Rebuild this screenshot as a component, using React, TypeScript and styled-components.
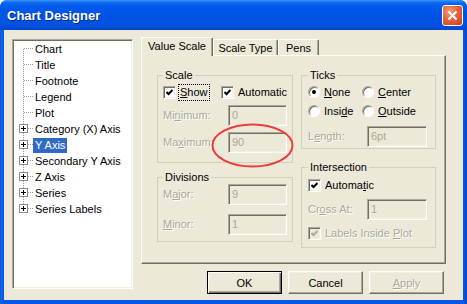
import React from "react";
import styled, { createGlobalStyle } from "styled-components";

const GlobalStyle = createGlobalStyle`
  html, body {
    margin: 0;
    padding: 0;
  }
  body {
    width: 467px;
    height: 304px;
    overflow: hidden;
    font: 11px "Liberation Sans", Arial, sans-serif;
    color: #000;
  }
  * {
    box-sizing: border-box;
  }
`;

const Window = styled.div`
  position: relative;
  width: 467px;
  height: 304px;
  display: flex;
  flex-direction: column;
  background: linear-gradient(90deg, #0a3fc0 0, #1a6cf0 1px, #0658e8 3px, #0658e8 calc(100% - 3px), #0a3fc0 100%);
  border-radius: 7px 7px 0 0;
  overflow: hidden;
`;

const TitleBar = styled.div`
  height: 30px;
  flex: none;
  display: flex;
  align-items: center;
  justify-content: space-between;
  padding: 0 4px 0 7px;
  background: linear-gradient(180deg, #3d95ff 0, #0a66f0 3px, #0058ec 8px, #0055e5 50%, #0152e0 85%, #0047cc 100%);
`;

const Title = styled.div`
  color: #fff;
  font: bold 13px "Liberation Sans", Arial, sans-serif;
  text-shadow: 1px 1px 0 #0a2a80;
  padding-top: 1px;
`;

const CloseButton = styled.div`
  width: 21px;
  height: 21px;
  border: 1px solid #fff;
  border-radius: 3px;
  background: radial-gradient(circle at 35% 30%, #f29a7c 0, #e2653f 45%, #c73e1a 100%);
  display: flex;
  align-items: center;
  justify-content: center;
`;

const Client = styled.div`
  flex: 1;
  margin: 0 4px 4px;
  background: #ece9d8;
  display: flex;
  padding: 0 17px 0 8px;
`;

const Tree = styled.div`
  margin-top: 9px;
  width: 121px;
  height: 250px;
  flex: none;
  background: #fff;
  border: 1px solid;
  border-color: #aca899 #fff #fff #aca899;
  box-shadow: inset 1px 1px 0 #716f64, inset -1px -1px 0 #f1efe2;
  padding: 1px 1px;
`;

const TreeRow = styled.div`
  display: flex;
  align-items: center;
  height: 16px;
`;

const TreeLabel = styled.span<{ $selected?: boolean }>`
  padding: 0 2px;
  line-height: 15px;
  white-space: nowrap;
  background: ${(p) => (p.$selected ? "#316ac5" : "transparent")};
  color: ${(p) => (p.$selected ? "#fff" : "#000")};
`;

const Right = styled.div`
  flex: 1;
  margin-left: 8px;
  padding-top: 7px;
  display: flex;
  flex-direction: column;
`;

const Tabs = styled.div`
  display: flex;
  align-items: flex-end;
  height: 18px;
  position: relative;
  z-index: 1;
`;

const Tab = styled.div<{ $active?: boolean; $w: number }>`
  width: ${(p) => p.$w}px;
  height: ${(p) => (p.$active ? 19 : 16)}px;
  margin-bottom: ${(p) => (p.$active ? -1 : 0)}px;
  background: #ece9d8;
  border: 1px solid;
  border-bottom: none;
  border-color: #fff #716f64 #716f64 #fff;
  border-radius: 2px 2px 0 0;
  box-shadow: inset -1px 0 0 #aca899;
  display: flex;
  align-items: center;
  justify-content: center;
  padding-bottom: ${(p) => (p.$active ? 2 : 0)}px;
  white-space: nowrap;
`;

const Panel = styled.div`
  height: 209px;
  border: 1px solid;
  border-color: #fff #716f64 #716f64 #fff;
  box-shadow: inset -1px -1px 0 #aca899;
  padding: 13px 0 0 15px;
  display: flex;
  gap: 8px;
`;

const Column = styled.div<{ $w: number; $gap: number }>`
  width: ${(p) => p.$w}px;
  display: flex;
  flex-direction: column;
  gap: ${(p) => p.$gap}px;
`;

const Group = styled.fieldset<{ $h: number; $pad: number }>`
  margin: 0;
  min-width: 0;
  height: ${(p) => p.$h}px;
  padding: 0 ${(p) => p.$pad}px;
  border: 1px solid #d0d0bf;
  border-radius: 0;
`;

const Legend = styled.legend`
  margin-left: 0;
  padding: 0 2px;
  line-height: 13px;
`;

const Row = styled.div<{ $mt: number; $h?: number }>`
  display: flex;
  align-items: center;
  margin-top: ${(p) => p.$mt}px;
  height: ${(p) => p.$h ?? 16}px;
`;

const Item = styled.div<{ $w?: number }>`
  display: flex;
  align-items: center;
  gap: 4px;
  width: ${(p) => (p.$w ? `${p.$w}px` : "auto")};
  white-space: nowrap;
`;

const Box = styled.span<{ $disabled?: boolean }>`
  width: 13px;
  height: 13px;
  flex: none;
  border: 1px solid;
  border-color: #aca899 #fff #fff #aca899;
  box-shadow: inset 1px 1px 0 #716f64, inset -1px -1px 0 #f1efe2;
  background: ${(p) => (p.$disabled ? "#ece9d8" : "#fff")};
  display: flex;
  align-items: center;
  justify-content: center;
`;

const Radio = styled.span<{ $on?: boolean }>`
  width: 12px;
  height: 12px;
  flex: none;
  border-radius: 50%;
  border: 1px solid;
  border-color: #aca899 #fff #fff #aca899;
  box-shadow: inset 1px 1px 0 #716f64;
  background: #fff;
  display: flex;
  align-items: center;
  justify-content: center;

  &::after {
    content: "";
    width: 4px;
    height: 4px;
    border-radius: 50%;
    background: ${(p) => (p.$on ? "#000" : "transparent")};
  }
`;

const Text = styled.span<{ $disabled?: boolean; $focus?: boolean }>`
  color: ${(p) => (p.$disabled ? "#aca899" : "#000")};
  text-shadow: ${(p) => (p.$disabled ? "1px 1px 0 #fff" : "none")};
  outline: ${(p) => (p.$focus ? "1px dotted #000" : "none")};
  padding: ${(p) => (p.$focus ? "1px 1px" : "0")};
  margin-left: ${(p) => (p.$focus ? -1 : 0)}px;
  line-height: 13px;
`;

const FieldLabel = styled(Text)<{ $w: number }>`
  width: ${(p) => p.$w}px;
  flex: none;
`;

const TextBox = styled.div`
  width: 60px;
  height: 21px;
  border: 1px solid;
  border-color: #aca899 #fff #fff #aca899;
  box-shadow: inset 1px 1px 0 #716f64, inset -1px -1px 0 #f1efe2;
  background: #ece9d8;
  color: #aca899;
  padding: 3px 0 0 3px;
  line-height: 13px;
`;

const ButtonRow = styled.div`
  display: flex;
  justify-content: flex-end;
  gap: 6px;
  margin-top: 7px;
  padding-right: 2px;
`;

const Button = styled.div<{ $default?: boolean; $disabled?: boolean }>`
  width: 75px;
  height: 23px;
  display: flex;
  align-items: center;
  justify-content: center;
  background: #ece9d8;
  border: 1px solid;
  border-color: ${(p) => (p.$default ? "#000" : "#fff #716f64 #716f64 #fff")};
  box-shadow: ${(p) =>
    p.$default
      ? "inset 1px 1px 0 #fff, inset -1px -1px 0 #716f64, inset -2px -2px 0 #aca899"
      : "inset -1px -1px 0 #aca899, inset 1px 1px 0 #f1efe2"};
  color: ${(p) => (p.$disabled ? "#aca899" : "#000")};
  text-shadow: ${(p) => (p.$disabled ? "1px 1px 0 #fff" : "none")};
`;

const Annotation = styled.svg`
  position: absolute;
  left: 211px;
  top: 123px;
  pointer-events: none;
`;

function Connector({ first, last, plus }: { first?: boolean; last?: boolean; plus?: boolean }) {
  return (
    <svg width="19" height="16" style={{ flex: "none" }} shapeRendering="crispEdges">
      <line
        x1="9.5"
        y1={first ? 8 : 0}
        x2="9.5"
        y2={last ? 8 : 16}
        stroke="#9a9a9a"
        strokeDasharray="1 1"
      />
      <line x1="10" y1="7.5" x2="19" y2="7.5" stroke="#9a9a9a" strokeDasharray="1 1" />
      {plus && (
        <>
          <rect x="5.5" y="3.5" width="8" height="8" fill="#fff" stroke="#8c8c8c" />
          <line x1="7" y1="7.5" x2="12" y2="7.5" stroke="#000" />
          <line x1="9.5" y1="5" x2="9.5" y2="10" stroke="#000" />
        </>
      )}
    </svg>
  );
}

const Check = ({ disabled }: { disabled?: boolean }) => (
  <Box $disabled={disabled}>
    <svg width="7" height="7" viewBox="0 0 7 7">
      <polyline
        points="0.5,3 2.5,5 6.5,1"
        fill="none"
        stroke={disabled ? "#aca899" : "#000"}
        strokeWidth="2"
      />
    </svg>
  </Box>
);

const treeItems = [
  { label: "Chart" },
  { label: "Title" },
  { label: "Footnote" },
  { label: "Legend" },
  { label: "Plot" },
  { label: "Category (X) Axis", plus: true },
  { label: "Y Axis", plus: true, selected: true },
  { label: "Secondary Y Axis", plus: true },
  { label: "Z Axis", plus: true },
  { label: "Series", plus: true },
  { label: "Series Labels", plus: true },
];

export default function App() {
  return (
    <>
      <GlobalStyle />
      <Window>
        <TitleBar>
          <Title>Chart Designer</Title>
          <CloseButton>
            <svg width="11" height="11" viewBox="0 0 11 11">
              <path d="M1.5 1.5 L9.5 9.5 M9.5 1.5 L1.5 9.5" stroke="#fff" strokeWidth="2" />
            </svg>
          </CloseButton>
        </TitleBar>
        <Client>
          <Tree>
            {treeItems.map((it, i) => (
              <TreeRow key={it.label}>
                <Connector first={i === 0} last={i === treeItems.length - 1} plus={it.plus} />
                <TreeLabel $selected={it.selected}>{it.label}</TreeLabel>
              </TreeRow>
            ))}
          </Tree>
          <Right>
            <Tabs>
              <Tab $active $w={72}>Value Scale</Tab>
              <Tab $w={65}>Scale Type</Tab>
              <Tab $w={41}>Pens</Tab>
            </Tabs>
            <Panel>
              <Column $w={136} $gap={8}>
                <Group $h={94} $pad={5}>
                  <Legend>Scale</Legend>
                  <Row $mt={2}>
                    <Item $w={58}>
                      <Check />
                      <Text $focus>
                        <u>S</u>how
                      </Text>
                    </Item>
                    <Item>
                      <Check />
                      <Text>Automatic</Text>
                    </Item>
                  </Row>
                  <Row $mt={5} $h={21}>
                    <FieldLabel $w={65} $disabled>
                      Mi<u>n</u>imum:
                    </FieldLabel>
                    <TextBox>0</TextBox>
                  </Row>
                  <Row $mt={6} $h={21}>
                    <FieldLabel $w={65} $disabled>
                      Ma<u>x</u>imum:
                    </FieldLabel>
                    <TextBox>90</TextBox>
                  </Row>
                </Group>
                <Group $h={71} $pad={5}>
                  <Legend>Divisions</Legend>
                  <Row $mt={0} $h={21}>
                    <FieldLabel $w={65} $disabled>
                      M<u>a</u>jor:
                    </FieldLabel>
                    <TextBox>9</TextBox>
                  </Row>
                  <Row $mt={9} $h={21}>
                    <FieldLabel $w={65} $disabled>
                      <u>M</u>inor:
                    </FieldLabel>
                    <TextBox>1</TextBox>
                  </Row>
                </Group>
              </Column>
              <Column $w={135} $gap={12}>
                <Group $h={80} $pad={6}>
                  <Legend>Ticks</Legend>
                  <Row $mt={2}>
                    <Item $w={54}>
                      <Radio $on />
                      <Text>
                        <u>N</u>one
                      </Text>
                    </Item>
                    <Item>
                      <Radio />
                      <Text>
                        <u>C</u>enter
                      </Text>
                    </Item>
                  </Row>
                  <Row $mt={3}>
                    <Item $w={54}>
                      <Radio />
                      <Text>
                        Insi<u>d</u>e
                      </Text>
                    </Item>
                    <Item>
                      <Radio />
                      <Text>
                        <u>O</u>utside
                      </Text>
                    </Item>
                  </Row>
                  <Row $mt={7} $h={21}>
                    <FieldLabel $w={59} $disabled>
                      L<u>e</u>ngth:
                    </FieldLabel>
                    <TextBox>6pt</TextBox>
                  </Row>
                </Group>
                <Group $h={87} $pad={6}>
                  <Legend>Intersection</Legend>
                  <Row $mt={3}>
                    <Item>
                      <Check />
                      <Text>
                        Automa<u>t</u>ic
                      </Text>
                    </Item>
                  </Row>
                  <Row $mt={6} $h={21}>
                    <FieldLabel $w={59} $disabled>
                      Cr<u>o</u>ss At:
                    </FieldLabel>
                    <TextBox>1</TextBox>
                  </Row>
                  <Row $mt={5}>
                    <Item>
                      <Check disabled />
                      <Text $disabled>
                        Labels Inside <u>P</u>lot
                      </Text>
                    </Item>
                  </Row>
                </Group>
              </Column>
            </Panel>
            <ButtonRow>
              <Button $default>OK</Button>
              <Button>Cancel</Button>
              <Button $disabled>
                <span>
                  <u>A</u>pply
                </span>
              </Button>
            </ButtonRow>
          </Right>
        </Client>
        <Annotation width="83" height="45">
          <ellipse cx="41.5" cy="22.5" rx="40" ry="21" fill="none" stroke="#ee3b3b" strokeWidth="2" />
        </Annotation>
      </Window>
    </>
  );
}
